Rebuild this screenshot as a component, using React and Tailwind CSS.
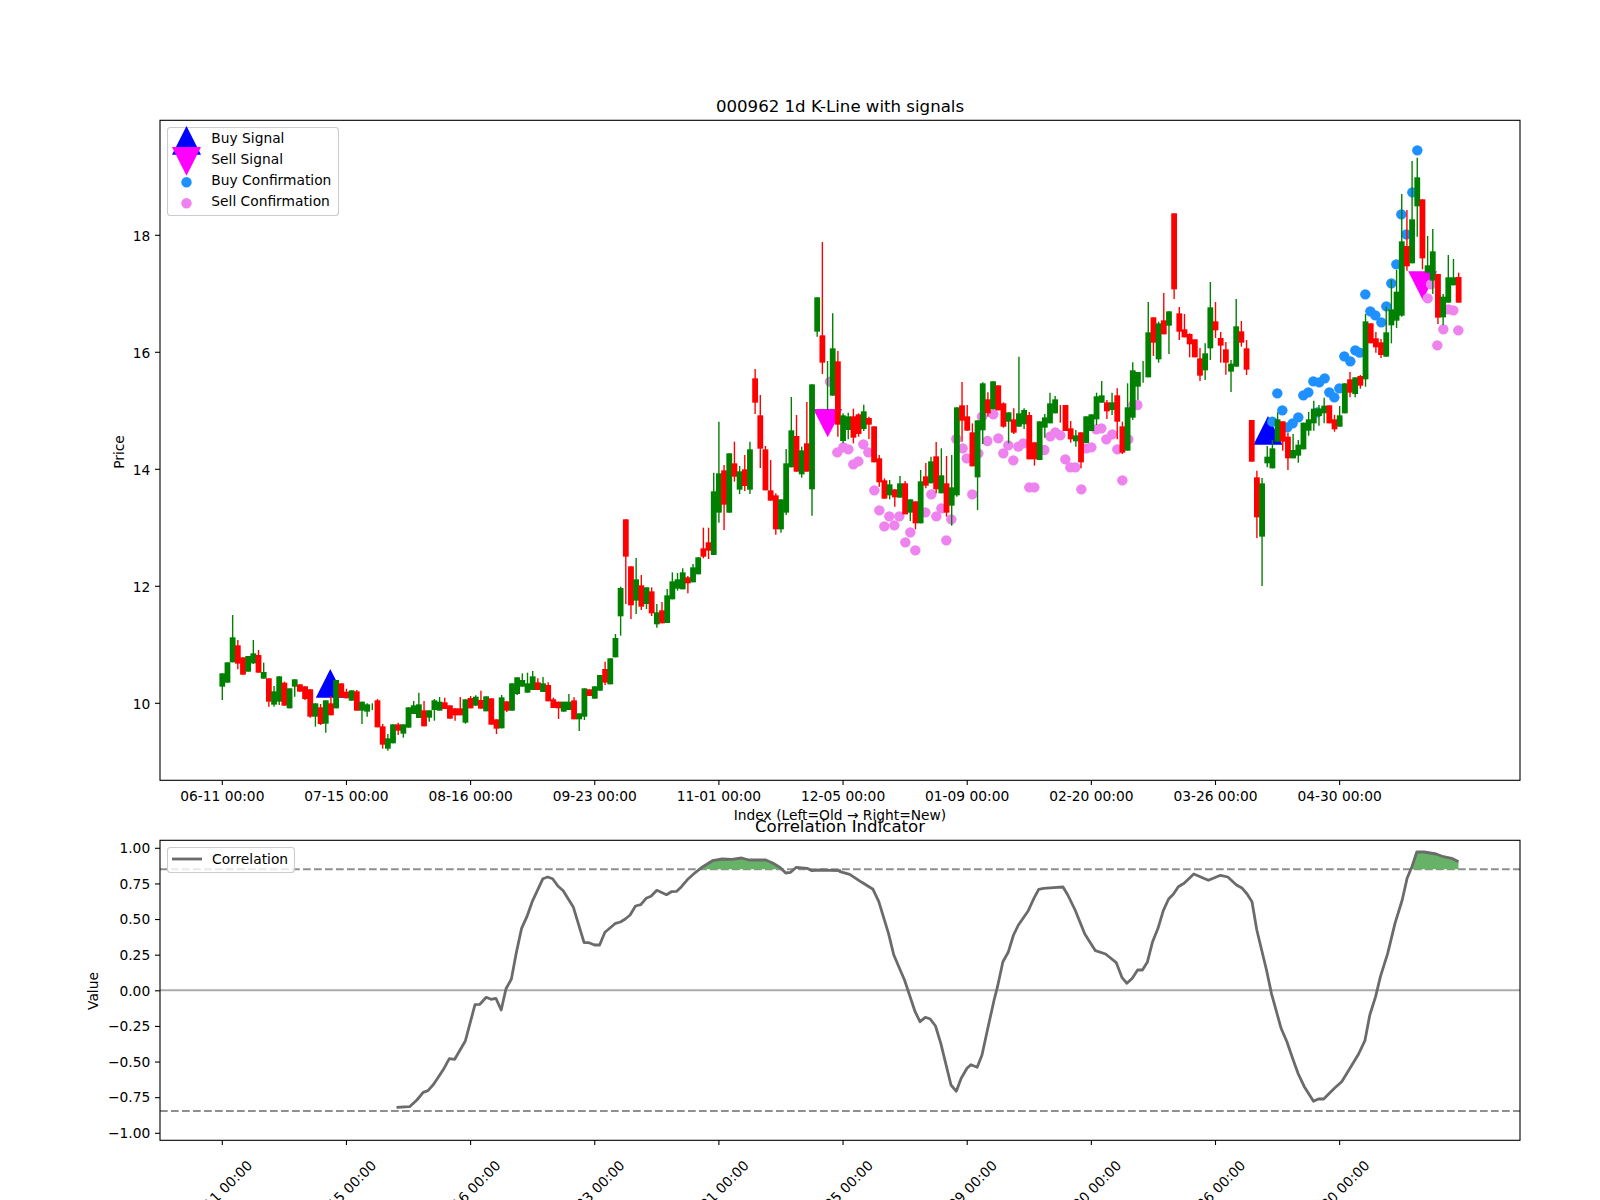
import React from "react";

// candle geometry, read off the picture
const X0 = 222.3;
const STEP = 5.173;
const candleX = (i) => X0 + STEP * i;

// each row: [colour, bodyTop, bodyBottom, wickTop, wickBottom]; "w" colours have a wick only
const segA = [
  ["g",250,290,250,330],["g",217,278],["g",142,217,75,217],["r",166,221,150,238],["r",202,254],["g",198,245],["g",190,220,150,222],["r",195,248,180,248],["g",246,266,218,266],["r",265,335,265,350],
  ["g",304,344,288,350],["g",259,335,259,345],["r",278,347,275,347],["g",295,355],["g",268,290,268,320],["r",283,305],["r",289,327,289,330],["r",298,380,297,383],["g",340,380,340,410],["r",352,402,342,405],
  ["g",331,401,331,428],["r",340,376,318,376],["g",270,355],["r",280,322],["r",305,325,296,325],["g",301,332],["r",304,362,300,362],["g",335,362,335,402],["g",343,365,340,380],["gw",0,0,340,360],
  ["r",331,412,327,412],["r",409,464,402,476],["g",445,476,432,482],["g",403,460],["r",403,422,398,435],["g",403,431,403,443],["g",352,413],["g",346,372,333,372],["g",343,384,308,384],["r",361,409,333,409],
  ["g",361,383,361,395],["g",331,360,327,392],["g",335,362,321,362],["r",337,357,323,357],["r",346,386],["r",355,376,355,392],["r",355,376,321,376],["g",328,398,328,401],["r",324,355,318,355],["g",320,347,316,347],
  ["r",330,356,302,356],["g",319,364],["r",325,404],["r",388,416,388,432],["g",322,415,315,415],["r",334,362,334,366],["g",280,362],["g",262,312,262,315],["g",270,290,250,290],["g",280,308,248,308],
  ["g",259,300,243,300],["r",277,300,265,300],["g",280,306,261,306],["r",285,334,277,334],["r",328,354,323,354],["r",335,355,335,387],["g",335,365],["g",335,360,312,360],["r",331,388,322,388],["g",370,388,370,423],
  ["g",295,380,295,390],["r",298,318],["g",289,326],
];
const segB = [
  ["g",585,632],["r",567,608,545,615],["g",535,613],["g",474,532,462,532],["g",324,409,320,467],["r",118,230,118,372],["r",259,376,259,417],["g",298,362,234,402],["r",316,380,285,390],["g",322,372,322,387],
  ["r",334,400,322,408],["g",397,433,372,443],["r",391,430,366,430],["g",346,429,327,429],["g",304,358,277,358],["g",298,326,279,332],["g",277,328,265,328],["r",292,310,288,340],["g",262,307,252,307],["g",232,283],
];
const segC = [
  ["r",955,980,893,985],["r",937,962,893,987],["g",784,975,728,975],["g",730,848,575,878],["r",721,824,705,900],["g",670,848],["r",700,740,635,755],["g",724,779,708,792],["r",718,768,675,783],["g",658,779,635,792],
  ["r",445,518,417,552],["r",556,656,495,714],["r",658,781,648,781],["r",781,812,690,812],["r",796,898,790,914],["g",808,898,808,908],["g",700,848,657,855],["g",601,712,501,712],["r",618,725,555,725],["g",661,733,650,743],
  ["r",640,725,516,725],["g",463,778,463,857],["g",202,305,202,320],["r",316,398,36,432],["gw",0,0,393,540],["g",355,497,250,497],["r",394,584,363,620],["g",556,633,550,640],["g",559,600,548,628],["r",559,623,536,640],
  ["r",553,612,550,620],["g",544,597,524,603],["r",564,584,560,627],["r",589,697],["r",685,757,675,770],["r",751,806,745,806],["g",763,796,750,808],["r",778,802,778,830],["g",760,803,738,803],["r",760,853,753,853],
  ["g",808,848,808,873],["r",814,880,814,898],["g",754,880,720,880],["r",739,767,699,775],["g",694,760,680,760],["r",679,778,636,790],["g",736,790,655,790],["r",760,848,678,860],["g",772,827,675,887],["g",532,796,532,800],
  ["r",526,572,456,635],["r",559,602,525,602],["r",607,709,580,709],["g",571,742,571,840],["g",460,601,457,642],["r",508,550,487,560],["g",454,538],["r",466,541],["r",520,590,517,593],
];
const segD = [
  ["g",637,665,637,730],["r",658,698,625,702],["g",640,680,470,680],["g",630,673,625,687],["r",645,778,636,778],["r",727,778,727,797],["g",664,780],["g",652,683,642,713],["g",610,670,578,670],["g",598,640,588,640],
  ["rw",0,0,615,668],["r",615,693],["r",685,718,663,728],["g",706,724,690,740],["r",697,787,697,805],["g",649,729],["g",643,693],["g",589,658,578,675],["g",586,608,543,608],["r",607,634,600,657],
  ["g",607,630,578,645],["r",586,665,565,718],["r",679,758,665,762],["g",622,752,550,752],["g",511,653,487,660],["g",516,560,516,600],["gw",0,0,483,548],["g",397,532,306,532],["r",352,428,352,468],["g",370,478,365,488],
  ["r",361,403,279,403],["g",334,377,334,462],["r",40,268,40,297],["r",340,395,321,420],["r",388,412,342,412],["r",402,433,400,472],["r",418,472],["r",475,527,444,543],["g",460,511,430,540],["g",322,445,246,480],
  ["r",364,391,306,414],["r",414,437,396,488],["r",448,488,426,524],["g",491,515,480,576],["g",379,500,297,500],
];
const segE = [
  ["r",604,638,573,650],["r",655,719,630,735],["r",870,995],["r",1042,1162,1022,1224],["g",1060,1220,1044,1368],["g",980,1000,948,1012],["g",955,1015,930,1015],["g",868,935,847,935],["r",874,935,874,962],["r",920,985,908,1020],
  ["g",960,985,912,985],["g",944,977,930,998],["g",878,958],["g",868,902,846,917],["g",836,880,812,902],["g",836,858,825,887],["g",827,850,803,880],["r",826,880],["r",868,898,855,905],["g",856,890,828,890],
  ["g",760,850],["r",748,788,726,802],["g",742,792,742,802],["r",738,767,735,776],["g",574,748,552,770],["r",580,640],["r",625,652,606,668],["r",637,675,627,684],["g",607,680,530,680],["g",538,586,450,640],
  ["g",485,572,420,594],["g",334,557,192,560],["r",348,409,240,422],["g",268,400,93,400],["g",142,229,83,320],["r",208,385,208,418],["g",406,428,318,428],["g",364,452,297,492],["r",432,563,432,582],["g",500,562,492,585],
  ["g",442,518,375,518],["g",442,466,387,466],["r",441,518,428,518],
];

const toReal = (rows, y0) =>
  rows.map(([c, t, b, wt, wb]) => ({
    color: c[0] === "g" ? "#008000" : "#ff0000",
    wickOnly: c.length > 1,
    top: y0 + t / 3,
    bottom: y0 + b / 3,
    wickTop: y0 + (wt ?? t) / 3,
    wickBottom: y0 + (wb ?? b) / 3,
  }));

const candles = [
  ...toReal(segA, 590),
  ...toReal(segB, 480),
  ...toReal(segC, 230),
  ...toReal(segD, 200),
  ...toReal(segE, 130),
];

const dots = (pts, x0, y0) => pts.map(([x, y]) => [x0 + x / 3, y0 + y / 3]);

const buyDots = dots(
  [[532,61],[517,187],[484,253],[499,313],[469,403],[454,460],[376,493],[439,529],[391,544],[406,556],[424,577],[346,661],[359,668],[313,679],[331,694],[254,745],[238,757],[220,754],[205,787],[190,796],[298,775],[268,787],[283,802],[232,847],[175,862],[158,880],[142,892],[112,790],[127,841],[97,875]],
  1240,
  130
);

const sellDots = [
  ...dots(
    [[390,455],[412,667],[430,652],[445,658],[460,703],[475,694],[490,643],[505,667],[523,781],[538,841],[553,889],[568,859],[583,886],[598,859],[616,937],[631,907],[646,961],[676,847],[694,793],[709,859],[724,835],[739,931],[754,868],[769,627],[788,655],[800,685],[835,670],[817,793],[846,560],[862,633],[880,553],[895,625],[910,670],[925,646],[940,691],[955,650]],
    700,
    230
  ),
  ...dots(
    [[70,730],[88,862],[103,862],[133,750],[151,709],[166,697],[181,706],[196,778],[211,802],[226,802],[244,868],[259,745],[274,742],[289,688],[304,685],[319,718],[337,703],[352,748],[367,841],[385,718],[400,615],[412,615]],
    1000,
    200
  ),
  ...dots([[563,505],[573,463],[592,646],[610,598],[625,538],[640,541],[655,601]], 1240, 130),
];

// correlation line, read from the two lower crops
const ZX = 1568 / 760;
const linePts = [
  ...[[653,982],[680,980],[695,960],[708,937],[718,932],[730,912],[750,868],[762,836],[773,838],[795,783],[815,674],[825,673],[838,652],[848,658],[858,655],[869,690],[879,626],[890,597],[900,520],[911,445],[922,410],[933,365],[955,296],[965,291],[975,296],[986,318],[997,332],[1018,382],[1040,488],[1050,488],[1062,495],[1072,495],[1083,457],[1105,430],[1115,426],[1125,417],[1135,405],[1146,378],[1157,374],[1168,355],[1178,349],[1190,331],[1210,344],[1220,335],[1231,334],[1241,320],[1255,296],[1270,277],[1285,260],[1305,242],[1325,237],[1345,238],[1365,234],[1380,240],[1415,240],[1430,250],[1445,263],[1456,279],[1466,277],[1478,262],[1500,265],[1510,272],[1525,270],[1568,272]].map(([x, y]) => [80 + x / ZX, 780 + y / 3]),
  ...[[0,275],[20,283],[45,307],[68,328],[80,365],[100,460],[111,525],[133,600],[155,695],[165,725],[176,712],[186,717],[197,738],[208,790],[218,850],[229,915],[240,934],[250,895],[262,865],[270,854],[283,862],[293,825],[305,745],[318,660],[325,620],[336,545],[347,517],[358,465],[368,435],[388,393],[400,355],[410,328],[420,325],[440,323],[460,321],[470,345],[485,390],[505,462],[527,512],[548,522],[570,548],[582,593],[592,610],[603,595],[614,570],[624,570],[634,547],[645,485],[656,445],[667,392],[678,357],[688,342],[698,320],[710,310],[730,282],[760,301],[785,286],[800,291],[818,315],[830,325],[840,342],[850,365],[860,450],[880,570],[890,640],[910,745],[922,785],[935,840],[945,880],[958,920],[977,964],[987,957],[998,957],[1020,925],[1035,905],[1050,870],[1070,822],[1083,782],[1093,705],[1105,650],[1115,590],[1130,520],[1145,430],[1160,360],[1170,295],[1180,260],[1190,216],[1205,216],[1230,222],[1245,230],[1262,235],[1276,245]].map(([x, y]) => [840 + x / ZX, 780 + y / 3]),
];

const toPath = (pts) => pts.map(([x, y]) => `${x.toFixed(1)},${y.toFixed(1)}`).join(" ");
const Y85 = 869.3;
const fillA = [[700, Y85], ...linePts.filter(([x, y]) => x > 700 && x < 780 && y < Y85), [780, Y85]];
const fillB = [[1411, Y85], ...linePts.filter(([x, y]) => x > 1411 && y < Y85), [1458.5, Y85]];

const dates = ["06-11", "07-15", "08-16", "09-23", "11-01", "12-05", "01-09", "02-20", "03-26", "04-30"];
const tickX = dates.map((_, k) => X0 + 124.15 * k);
const priceTicks = [[18, 235.3], [16, 352.3], [14, 469.3], [12, 586.3], [10, 703.3]];
const valueTicks = ["1.00", "0.75", "0.50", "0.25", "0.00", "−0.25", "−0.50", "−0.75", "−1.00"];

function Triangle({ cx, top, bottom, color }) {
  return <polygon points={`${cx - 14.5},${bottom} ${cx + 14.5},${bottom} ${cx},${top}`} fill={color} />;
}

function YTicks({ ticks, shift }) {
  return ticks.map(([label, y]) => (
    <g key={label}>
      <line x1="155" x2="160" y1={y} y2={y} stroke="#000" strokeWidth="1.1" />
      <text x="150.2" y={y + shift} textAnchor="end">
        {label}
      </text>
    </g>
  ));
}

function PriceChart() {
  return (
    <svg viewBox="0 0 1600 825" className="block w-[1600px] h-[825px] overflow-visible text-[13.8px]">
      <text x="840" y="112" textAnchor="middle" className="text-[16.6px]">
        000962 1d K-Line with signals
      </text>

      <Triangle cx={330.3} top={669} bottom={697.7} color="#0000ff" />
      <Triangle cx={827.7} top={437.3} bottom={409} color="#ff00ff" />
      <Triangle cx={1268} top={416} bottom={444.7} color="#0000ff" />
      <Triangle cx={1422.7} top={300} bottom={271.3} color="#ff00ff" />

      {sellDots.map(([x, y], i) => (
        <circle key={i} cx={x} cy={y} r="5.2" fill="#ee82ee" />
      ))}
      {buyDots.map(([x, y], i) => (
        <circle key={i} cx={x} cy={y} r="5.2" fill="#1e90ff" />
      ))}

      {candles.map((c, i) => (
        <g key={i}>
          <line x1={candleX(i)} x2={candleX(i)} y1={c.wickTop} y2={c.wickBottom} stroke={c.color} strokeWidth="1.39" />
          {!c.wickOnly && <rect x={candleX(i) - 2.9} y={c.top} width="5.8" height={c.bottom - c.top} fill={c.color} />}
        </g>
      ))}

      <rect x="160" y="120.3" width="1360" height="660" fill="none" stroke="#000" strokeWidth="1.1" />
      <YTicks ticks={priceTicks} shift={5.3} />
      {dates.map((d, k) => (
        <g key={d}>
          <line x1={tickX[k]} x2={tickX[k]} y1="780" y2="785" stroke="#000" strokeWidth="1.1" />
          <text x={tickX[k]} y="801" textAnchor="middle">
            {d} 00:00
          </text>
        </g>
      ))}
      <text x="840" y="820" textAnchor="middle">
        Index (Left=Old → Right=New)
      </text>
      <text x="124" y="452" textAnchor="middle" transform="rotate(-90 124 452)">
        Price
      </text>

      {/* legend */}
      <rect x="167.5" y="127.5" width="171" height="88" rx="3" fill="#fff" fillOpacity="0.8" stroke="#ccc" strokeWidth="1.1" />
      <polygon points="172,154.7 201,154.7 186.5,126" fill="#0000ff" />
      <polygon points="172,147 201,147 186.5,175.7" fill="#ff00ff" />
      <circle cx="186.5" cy="182.3" r="5.2" fill="#1e90ff" />
      <circle cx="186.5" cy="203.3" r="5.2" fill="#ee82ee" />
      <text x="211.3" y="143.3">Buy Signal</text>
      <text x="211.3" y="164.3">Sell Signal</text>
      <text x="211.3" y="185.3">Buy Confirmation</text>
      <text x="211.3" y="206.3">Sell Confirmation</text>
    </svg>
  );
}

function CorrelationChart() {
  return (
    <svg viewBox="0 825 1600 375" className="block w-[1600px] h-[375px] overflow-visible text-[13.8px]">
      <text x="840" y="831.7" textAnchor="middle" className="text-[16.6px]">
        Correlation Indicator
      </text>

      <line x1="160" x2="1520" y1="990.2" y2="990.2" stroke="#aaaaaa" strokeWidth="2.1" />
      <line x1="160" x2="1520" y1={Y85} y2={Y85} stroke="#8f8f8f" strokeWidth="2.1" strokeDasharray="7.7 3.3" />
      <line x1="160" x2="1520" y1="1111" y2="1111" stroke="#8f8f8f" strokeWidth="2.1" strokeDasharray="7.7 3.3" />

      <polygon points={toPath(fillA)} fill="#66b266" />
      <polygon points={toPath(fillB)} fill="#66b266" />
      <polyline points={toPath(linePts)} fill="none" stroke="#6b6b6b" strokeWidth="2.8" strokeLinejoin="round" />

      <rect x="160" y="840.3" width="1360" height="300" fill="none" stroke="#000" strokeWidth="1.1" />
      <YTicks ticks={valueTicks.map((v, k) => [v, 848.3 + 35.625 * k])} shift={4.7} />
      {dates.map((d, k) => (
        <g key={d}>
          <line x1={tickX[k]} x2={tickX[k]} y1="1140" y2="1145" stroke="#000" strokeWidth="1.1" />
          <text x={tickX[k] - 2.5} y="1197.5" textAnchor="middle" transform={`rotate(-45 ${tickX[k] - 2.5} 1192.5)`}>
            {d} 00:00
          </text>
        </g>
      ))}
      <text x="98" y="991" textAnchor="middle" transform="rotate(-90 98 991)">
        Value
      </text>

      {/* legend */}
      <rect x="167.5" y="847.5" width="127" height="25" rx="3" fill="#fff" fillOpacity="0.8" stroke="#ccc" strokeWidth="1.1" />
      <line x1="172" x2="202" y1="859" y2="859" stroke="#6b6b6b" strokeWidth="2.8" />
      <text x="212" y="864">Correlation</text>
    </svg>
  );
}

export default function App() {
  return (
    <div className="w-[1600px] h-[1200px] overflow-hidden bg-white text-black font-['DejaVu_Sans',sans-serif]">
      <PriceChart />
      <CorrelationChart />
    </div>
  );
}
